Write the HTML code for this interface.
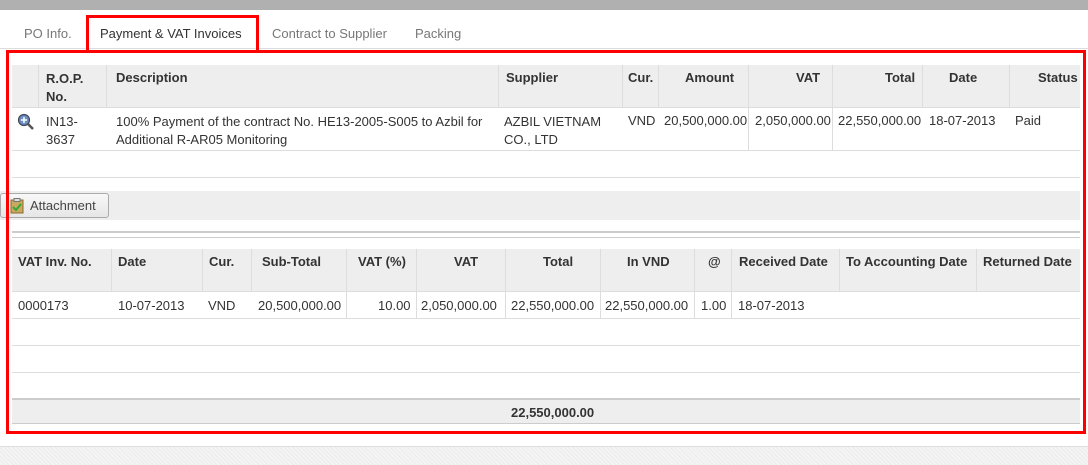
<!DOCTYPE html>
<html><head><style>
*{margin:0;padding:0;box-sizing:border-box}
body{width:1088px;height:465px;background:#fff;font-family:"Liberation Sans",Arial,sans-serif;font-size:12px;color:#333;position:relative;overflow:hidden}
.a{position:absolute}
.t{position:absolute;font-size:13px;color:#333;white-space:nowrap}
.h{font-weight:bold}
.vl{position:absolute;width:1px;background:#ddd}
.hl{position:absolute;height:1px;background:#ddd}
</style></head><body>
<div class="a" style="left:0;top:0;width:1088px;height:10px;background:#b0b0b0"></div>
<div class="hl" style="left:0;top:48px;width:1088px;background:#ddd"></div>
<div class="t" style="left:24px;top:26px;color:#777">PO Info.</div>
<div class="t" style="left:100px;top:26px;color:#333">Payment &amp; VAT Invoices</div>
<div class="t" style="left:272px;top:26px;color:#777">Contract to Supplier</div>
<div class="t" style="left:415px;top:26px;color:#777">Packing</div>
<div class="a" style="left:86px;top:15px;width:173px;height:35px;border:3px solid #f00;border-bottom:none"></div>

<!-- table 1 -->
<div class="a" style="left:12px;top:65px;width:1068px;height:42px;background:#eee"></div>
<div class="hl" style="left:12px;top:107px;width:1068px"></div>
<div class="hl" style="left:12px;top:150px;width:1068px"></div>
<div class="hl" style="left:12px;top:177px;width:1068px"></div>
<div class="vl" style="left:38px;top:65px;height:42px"></div>
<div class="vl" style="left:106px;top:65px;height:42px"></div>
<div class="vl" style="left:498px;top:65px;height:42px"></div>
<div class="vl" style="left:622px;top:65px;height:42px"></div>
<div class="vl" style="left:658px;top:65px;height:42px"></div>
<div class="vl" style="left:748px;top:65px;height:85px"></div>
<div class="vl" style="left:832px;top:65px;height:85px"></div>
<div class="vl" style="left:922px;top:65px;height:42px"></div>
<div class="vl" style="left:1009px;top:65px;height:42px"></div>
<div class="t h" style="left:46px;top:70px;line-height:18px">R.O.P.<br>No.</div>
<div class="t h" style="left:116px;top:70px">Description</div>
<div class="t h" style="left:506px;top:70px">Supplier</div>
<div class="t h" style="left:628px;top:70px">Cur.</div>
<div class="t h" style="left:685px;top:70px">Amount</div>
<div class="t h" style="left:796px;top:70px">VAT</div>
<div class="t h" style="left:885px;top:70px">Total</div>
<div class="t h" style="left:949px;top:70px">Date</div>
<div class="t h" style="left:1038px;top:70px">Status</div>
<svg class="a" style="left:17px;top:113px" width="18" height="18" viewBox="0 0 18 18"><circle cx="7" cy="7" r="5.5" fill="#6a8fc4" stroke="#445" stroke-width="1.2"/><path d="M7 4v6M4 7h6" stroke="#fff" stroke-width="1.5"/><path d="M11 11l5 5" stroke="#555" stroke-width="2.5"/></svg>
<div class="t" style="left:46px;top:113px;line-height:18px">IN13-<br>3637</div>
<div class="t" style="left:116px;top:113px;line-height:18px">100% Payment of the contract No. HE13-2005-S005 to Azbil for<br>Additional R-AR05 Monitoring</div>
<div class="t" style="left:504px;top:113px;line-height:18px">AZBIL VIETNAM<br>CO., LTD</div>
<div class="t" style="left:628px;top:113px">VND</div>
<div class="t" style="left:664px;top:113px">20,500,000.00</div>
<div class="t" style="left:755px;top:113px">2,050,000.00</div>
<div class="t" style="left:838px;top:113px">22,550,000.00</div>
<div class="t" style="left:929px;top:113px">18-07-2013</div>
<div class="t" style="left:1015px;top:113px">Paid</div>

<!-- attachment bar -->
<div class="a" style="left:0;top:191px;width:1080px;height:29px;background:#efeeee"></div>
<div class="a" style="left:0;top:193px;width:109px;height:25px;background:linear-gradient(#f8f8f8,#e6e6e6);border:1px solid #aaa;border-radius:3px"></div>
<svg class="a" style="left:10px;top:198px" width="14" height="16" viewBox="0 0 14 16"><rect x="1" y="2" width="12" height="13" fill="#c9a860" stroke="#8a6b2a"/><rect x="4" y="0.5" width="6" height="3" fill="#ddd" stroke="#777"/><path d="M3 9l3 3 5-6" stroke="#3a3" stroke-width="2" fill="none"/></svg>
<div class="t" style="left:30px;top:198px;color:#444">Attachment</div>
<div class="hl" style="left:12px;top:231px;width:1068px;background:#ccc;height:2px"></div>
<div class="hl" style="left:12px;top:237px;width:1068px;background:#ccc"></div>

<!-- table 2 -->
<div class="a" style="left:12px;top:249px;width:1068px;height:42px;background:#eee"></div>
<div class="hl" style="left:12px;top:291px;width:1068px"></div>
<div class="hl" style="left:12px;top:318px;width:1068px"></div>
<div class="hl" style="left:12px;top:345px;width:1068px"></div>
<div class="hl" style="left:12px;top:372px;width:1068px"></div>
<div class="a" style="left:12px;top:398px;width:1068px;height:26px;background:#eee;border-top:2px solid #ccc;border-bottom:1px solid #ccc"></div>
<div class="vl" style="left:111px;top:249px;height:42px"></div>
<div class="vl" style="left:202px;top:249px;height:42px"></div>
<div class="vl" style="left:251px;top:249px;height:42px"></div>
<div class="vl" style="left:346px;top:249px;height:69px"></div>
<div class="vl" style="left:416px;top:249px;height:69px"></div>
<div class="vl" style="left:505px;top:249px;height:69px"></div>
<div class="vl" style="left:600px;top:249px;height:69px"></div>
<div class="vl" style="left:694px;top:249px;height:69px"></div>
<div class="vl" style="left:731px;top:249px;height:69px"></div>
<div class="vl" style="left:839px;top:249px;height:42px"></div>
<div class="vl" style="left:976px;top:249px;height:42px"></div>
<div class="t h" style="left:18px;top:254px">VAT Inv. No.</div>
<div class="t h" style="left:118px;top:254px">Date</div>
<div class="t h" style="left:209px;top:254px">Cur.</div>
<div class="t h" style="left:262px;top:254px">Sub-Total</div>
<div class="t h" style="left:358px;top:254px">VAT (%)</div>
<div class="t h" style="left:454px;top:254px">VAT</div>
<div class="t h" style="left:543px;top:254px">Total</div>
<div class="t h" style="left:627px;top:254px">In VND</div>
<div class="t h" style="left:708px;top:254px">@</div>
<div class="t h" style="left:739px;top:254px">Received Date</div>
<div class="t h" style="left:846px;top:254px">To Accounting Date</div>
<div class="t h" style="left:983px;top:254px">Returned Date</div>
<div class="t" style="left:18px;top:298px">0000173</div>
<div class="t" style="left:118px;top:298px">10-07-2013</div>
<div class="t" style="left:208px;top:298px">VND</div>
<div class="t" style="left:258px;top:298px">20,500,000.00</div>
<div class="t" style="left:378px;top:298px">10.00</div>
<div class="t" style="left:421px;top:298px">2,050,000.00</div>
<div class="t" style="left:511px;top:298px">22,550,000.00</div>
<div class="t" style="left:605px;top:298px">22,550,000.00</div>
<div class="t" style="left:701px;top:298px">1.00</div>
<div class="t" style="left:738px;top:298px">18-07-2013</div>
<div class="t h" style="left:511px;top:405px">22,550,000.00</div>

<div class="a" style="left:6px;top:50px;width:1080px;height:384px;border:3px solid #f00"></div>
<div class="a" style="left:0;top:446px;width:1088px;height:19px;background:repeating-linear-gradient(45deg,#ececec 0 1px,#f4f4f4 1px 3px);border-top:1px solid #ddd"></div>
</body></html>
